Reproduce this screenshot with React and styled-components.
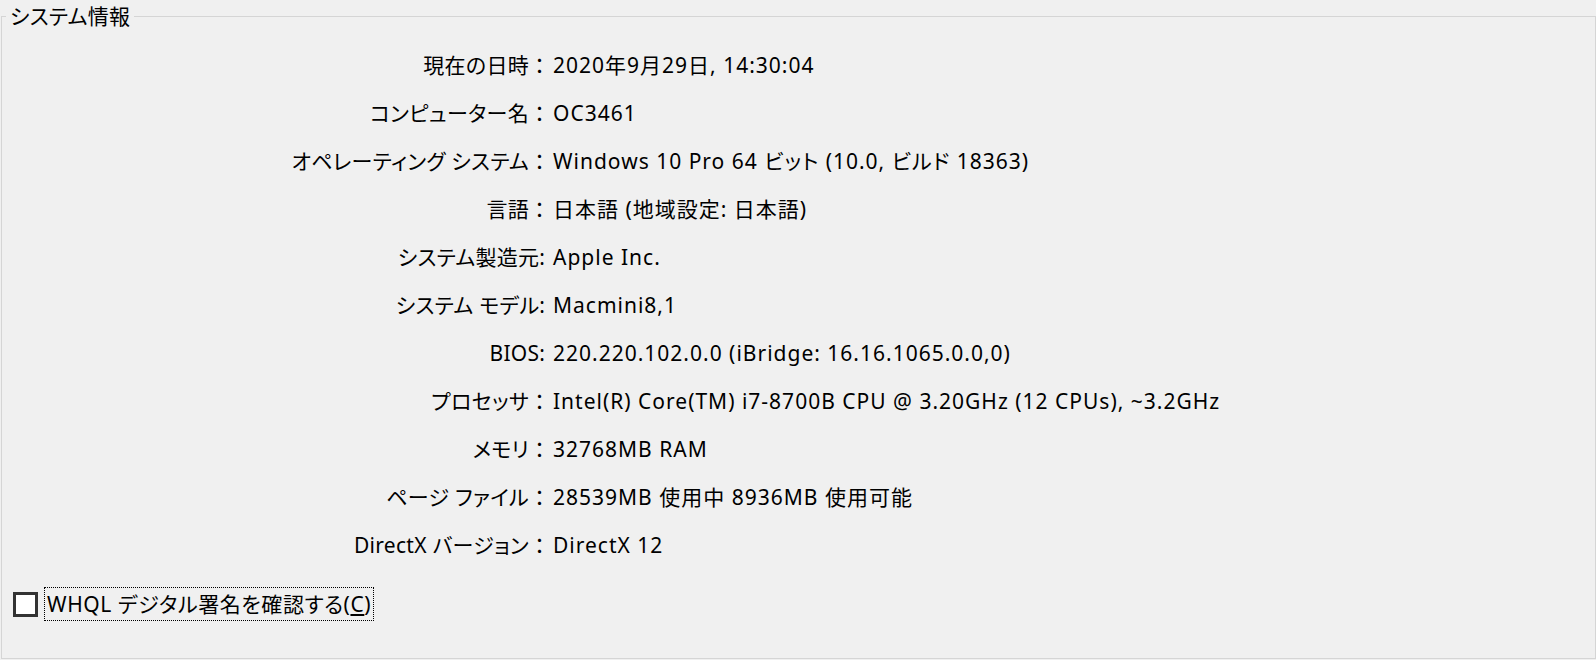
import React from "react";
import styled, { createGlobalStyle } from "styled-components";

const GlobalStyle = createGlobalStyle`
  * {
    box-sizing: border-box;
  }

  html,
  body {
    margin: 0;
    background-color: #f0f0f0;
  }

  body {
    font-family: "Noto Sans", "Noto Sans CJK JP", sans-serif;
    font-size: 21px;
    color: #000;
    font-feature-settings: "palt";
  }
`;

const rows = [
  ["現在の日時", "：", "2020年9月29日, 14:30:04"],
  ["コンピューター名", "：", "OC3461"],
  ["オペレーティング システム", "：", "Windows 10 Pro 64 ビット (10.0, ビルド 18363)"],
  ["言語", "：", "日本語 (地域設定: 日本語)"],
  ["システム製造元", ":", "Apple Inc."],
  ["システム モデル", ":", "Macmini8,1"],
  ["BIOS", ":", "220.220.102.0.0 (iBridge: 16.16.1065.0.0,0)"],
  ["プロセッサ", "：", "Intel(R) Core(TM) i7-8700B CPU @ 3.20GHz (12 CPUs), ~3.2GHz"],
  ["メモリ", "：", "32768MB RAM"],
  ["ページ ファイル", "：", "28539MB 使用中 8936MB 使用可能"],
  ["DirectX バージョン", "：", "DirectX 12"],
];

const App = () => {
  return (
    <>
      <GlobalStyle />
      <GroupBox>
        <Legend>システム情報</Legend>
        <InfoGrid>
          {rows.map(([label, colon, value]) => (
            <React.Fragment key={label}>
              <Label>
                {label}
                <Colon $wide={colon === "："}>{colon}</Colon>
              </Label>
              <Value>{value}</Value>
            </React.Fragment>
          ))}
        </InfoGrid>
        <CheckRow>
          <CheckBox type='checkbox' id='whql' />
          <CheckLabel htmlFor='whql'>
            WHQL デジタル署名を確認する(<u>C</u>)
          </CheckLabel>
        </CheckRow>
      </GroupBox>
    </>
  );
};

const GroupBox = styled.fieldset`
  margin: 0 0 0 1px;
  padding: 0;
  height: 659px;
  border: 1px solid #d5d5d5;
  min-width: 0;
`;

const Legend = styled.legend`
  margin-left: 4px;
  padding: 0 4px;
  line-height: 32px;
  font-size: 21px;
  letter-spacing: 0.3px;
`;

const InfoGrid = styled.div`
  display: grid;
  grid-template-columns: 543px auto;
  column-gap: 8px;
  grid-auto-rows: 48px;
  align-items: center;
  padding-top: 10px;
  line-height: 1.3;
`;

const Label = styled.div`
  text-align: right;
  white-space: nowrap;
  letter-spacing: 0.3px;
`;

const Colon = styled.span`
  letter-spacing: 0;
  font-feature-settings: ${(p) => (p.$wide ? "normal" : "palt")};
  margin-right: ${(p) => (p.$wide ? "-5px" : "0")};
`;

const Value = styled.div`
  white-space: nowrap;
  letter-spacing: 1px;
`;

const CheckRow = styled.div`
  display: flex;
  align-items: center;
  gap: 6px;
  margin-top: 17px;
  padding-left: 11px;
`;

const CheckBox = styled.input`
  appearance: none;
  margin: 0;
  width: 25px;
  height: 25px;
  border: 3px solid #333;
  background-color: #fff;
`;

const CheckLabel = styled.label`
  display: inline-block;
  padding: 0 2px;
  line-height: 32px;
  border: 1px dotted #000;
  letter-spacing: 0.6px;

  u {
    text-underline-offset: 2px;
  }
`;

export default App;
